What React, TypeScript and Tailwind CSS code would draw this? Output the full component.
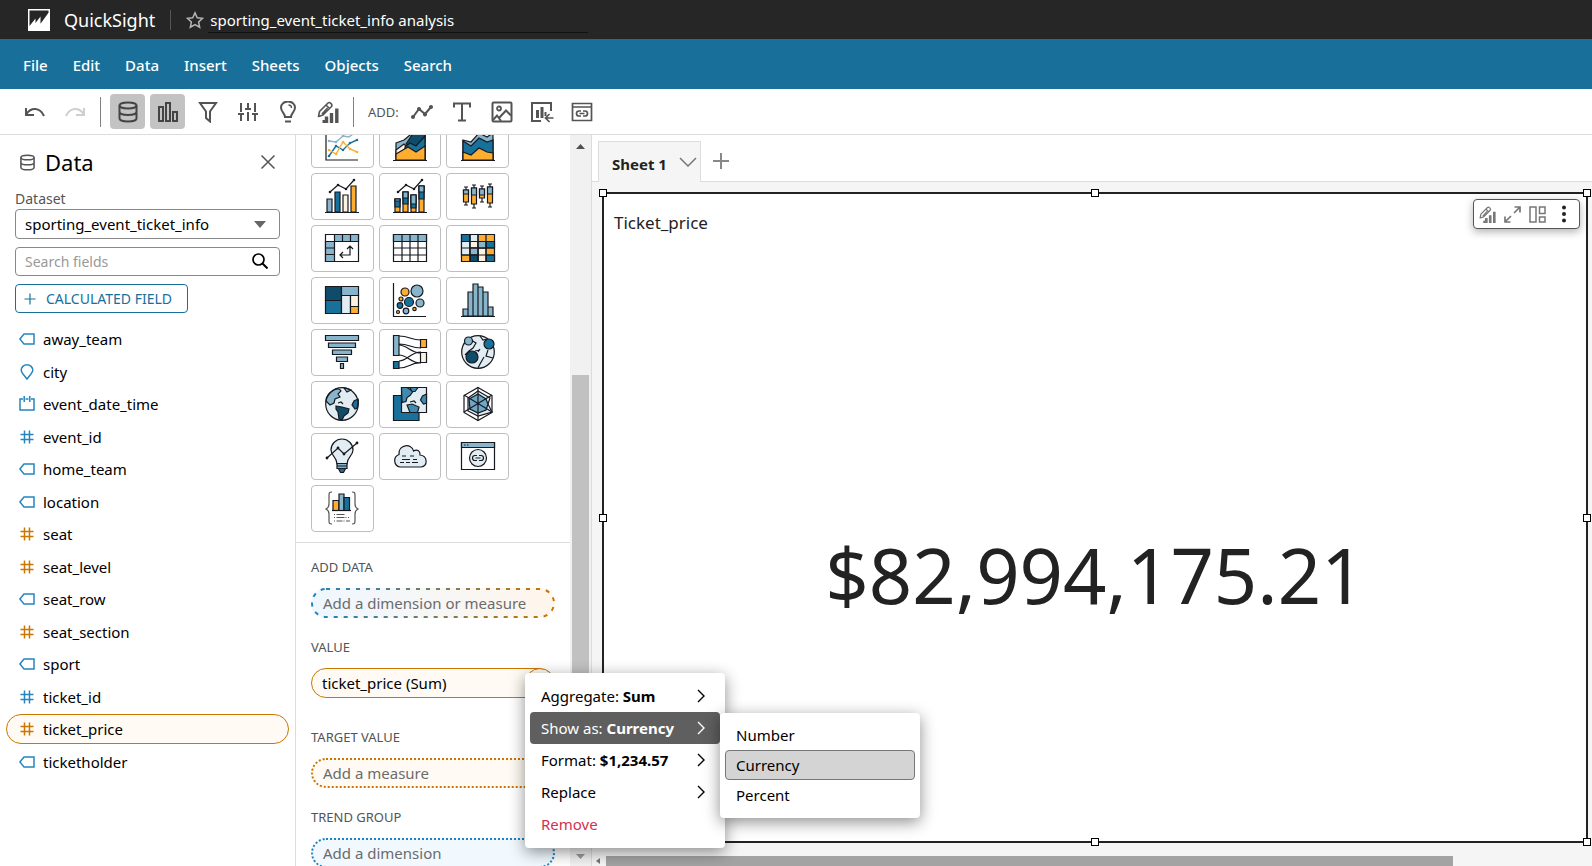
import React from 'react';

type P = { className?: string; children: React.ReactNode; vb?: string; w?: number; h?: number };
const Svg = ({ className, children, vb = '0 0 24 24', w = 24, h = 24 }: P) => (
  <svg className={className} viewBox={vb} width={w} height={h} fill="none" stroke="currentColor" strokeWidth="2" aria-hidden="true">
    {children}
  </svg>
);

const K = '#16191f';
const LB = '#88b5cb';
const MB = '#17719b';
const DB = '#0f4c6a';
const OR = '#fdad32';
const CR = '#fdf1e2';
const PB = '#e1edf2';

const Database = ({ className, w = 22 }: { className?: string; w?: number }) => (
  <Svg className={className} w={w} h={w} vb="0 0 22 22">
    <ellipse cx="11" cy="4.500" rx="8.500" ry="3" />
    <path d="M2.500 4.500v13c0 1.700 3.800 3 8.500 3s8.500-1.300 8.500-3v-13M2.500 11c0 1.700 3.800 3 8.500 3s8.500-1.300 8.500-3" />
  </Svg>
);

const EditChart = ({ w }: { w: number }) => (
  <Svg w={w} h={w} vb="0 0 22 22">
    <path strokeWidth="1.600" strokeLinejoin="round" d="M1.500 15.500l1-5L11 2c1.500-1.500 5 1.500 3.500 3.500L6 14zM9 4l3.500 3.500M5 13l5.500-6" />
    <path strokeWidth="3.400" d="M9.500 15.500V22M14.500 12v10M19.800 7.500V22" />
    <path strokeWidth="3" d="M5.500 20.500h2.500" />
  </Svg>
);

const tools: { name: string; icon: React.ReactNode; active?: boolean }[] = [
  { name: 'Data', active: true, icon: <Database /> },
  {
    name: 'Visuals', active: true,
    icon: <Svg w={22} h={22} vb="0 0 22 22"><path d="M2 6h4v14H2zM9 2h4v18H9zM16 11h4v9h-4z" /></Svg>,
  },
  { name: 'Filter', icon: <Svg w={20} h={22} vb="0 0 20 22"><path d="M2 2h16l-6 8.500v10L8 17v-6.500z" /></Svg> },
  {
    name: 'Parameters',
    icon: <Svg w={22} h={22} vb="0 0 22 22"><path d="M4 2v9M1 13h6M4 13v7M11 2v5M8 8h6M11 11v9M18 2v9M15 13h6M18 13v7" /></Svg>,
  },
  {
    name: 'Insights',
    icon: <Svg w={20} h={22} vb="0 0 20 22"><path d="M7 16c0-4-4-5-4-9.500a7 6 0 0 1 14 0c0 4.500-4 5.500-4 9.500zM7 20.500h6" /><path strokeWidth="1.400" d="M10.500 4c2 0 3 1.200 3 3" /></Svg>,
  },
  { name: 'Edit visual', icon: <EditChart w={22} /> },
];

const addTools: { name: string; icon: React.ReactNode }[] = [
  {
    name: 'Visual',
    icon: <Svg w={22} h={22} vb="0 0 22 22"><path d="M2 16L8 8l6 5 6-7" /><path fill="currentColor" stroke="none" d="M2 14a2 2 0 1 0 .01 0zM8 6a2 2 0 1 0 .01 0zM14 11.500a2 2 0 1 0 .01 0zM20 4a2 2 0 1 0 .01 0z" /></Svg>,
  },
  { name: 'Text', icon: <Svg w={20} h={20} vb="0 0 20 20"><path d="M2 5.500V1.500h16v4M10 1.500v17M6 18.500h8" /></Svg> },
  {
    name: 'Image',
    icon: <Svg w={22} h={22} vb="0 0 22 22"><rect x="1.500" y="1.500" width="19" height="19" rx="1" /><circle cx="8" cy="7.500" r="2" strokeWidth="1.800" /><path d="M2 19l4-4.500 4 5.500M8 17l7-7.500 5 5" /></Svg>,
  },
  {
    name: 'Import visual',
    icon: <Svg w={24} h={22} vb="0 0 24 22"><path d="M11 20H2V2h19v8" /><path strokeWidth="3" d="M7.500 9v8M12 6v11" /><path d="M15.500 11v4" /><path strokeWidth="1.700" d="M23.500 17h-7M19.500 13l-4 4 4 4" /></Svg>,
  },
  {
    name: 'Custom content',
    icon: <Svg w={22} h={20} vb="0 0 22 20"><path strokeWidth="1.700" d="M1.500 1.500h19v17h-19zM1.500 5h19" /><path strokeWidth="1.700" d="M10 9H8a2.500 2.500 0 0 0 0 5h2M12 9h2a2.500 2.500 0 0 1 0 5h-2M8.500 11.500h5" /></Svg>,
  },
];

const FieldIcon = ({ kind }: { kind: string }) => {
  if (kind === 'tag')
    return <Svg w={16} h={12} vb="0 0 16 12" className="text-[#2585bf]"><path strokeWidth="1.500" d="M.9 6L5 1h10v10H5z" /></Svg>;
  if (kind === 'pin')
    return <Svg w={14} h={16} vb="0 0 14 16" className="text-[#2585bf]"><path strokeWidth="1.500" d="M7 15C4.500 11.500 1.200 9 1.200 6a5.800 5.200 0 0 1 11.600 0c0 3-3.300 5.500-5.800 9z" /></Svg>;
  if (kind === 'date')
    return <Svg w={16} h={16} vb="0 0 16 16" className="text-[#2585bf]"><path strokeWidth="1.500" d="M4 3H1v11h14V3h-3M6.500 3h3M5.200 0v6M10.800 0v6" /></Svg>;
  return (
    <Svg w={14} h={14} vb="0 0 14 14" className={kind === 'measure' ? 'text-[#cb7600]' : 'text-[#2585bf]'}>
      <path strokeWidth="1.500" d="M.5 4.500h13M.5 9.500h13M4.500.5v13M9.500.5v13" />
    </Svg>
  );
};

const fields: [string, string][] = [
  ['away_team', 'tag'], ['city', 'pin'], ['event_date_time', 'date'], ['event_id', 'id'], ['home_team', 'tag'],
  ['location', 'tag'], ['seat', 'measure'], ['seat_level', 'measure'], ['seat_row', 'tag'], ['seat_section', 'measure'],
  ['sport', 'tag'], ['ticket_id', 'id'], ['ticket_price', 'measure'], ['ticketholder', 'tag'],
];

const axis = <path d="M1 1v32h32" />;
const base = <path d="M0 33.500h34" />;
const trend = <><path d="M5 13l8-7 8 4 8-9" /><path strokeWidth="2.600" strokeLinecap="round" d="M5 13h.01M13 6h.01M21 10h.01M29 1h.01" /></>;
const continents = (
  <>
    <path fill={LB} d="M9 3c3-2 6-1 7 1l-3 3 2 3-5 2-1 4-4 2-4-4c0-5 4-9 8-11z" />
    <path fill={LB} d="M19 1l3 4 4-2c-2-1-5-2-7-2z" />
    <path fill={MB} d="M33 12l-4 2-2 4 3 4 2-1c1-3 2-6 1-9z" />
    <path fill={DB} d="M11 19l6 1 7 2-1 4-4 3-2 4-3-1-1-7-2-3z" />
    <path d="M13 16l3-1 2 2" />
  </>
);

const visuals: { name: string; art: React.ReactNode }[] = [
  {
    name: 'Line chart',
    art: <>{axis}<g strokeWidth="1.400"><path stroke={LB} d="M4 14l7 1 7-6 6 1 8-6" /><path stroke={MB} d="M4 29l7-10 7 4 7-7 7-3" /><path stroke={OR} d="M4 23l7 4 7-12 7 7 7 3" /></g><path stroke={OR} strokeWidth="2.600" strokeLinecap="round" d="M4 23h.01M11 27h.01M18 15h.01M25 22h.01M32 25h.01" /><path stroke={MB} strokeWidth="2.600" strokeLinecap="round" d="M4 29h.01M11 19h.01M18 23h.01M25 16h.01M32 13h.01" /><path stroke={LB} strokeWidth="2.600" strokeLinecap="round" d="M4 14h.01M11 15h.01M18 9h.01" /></>,
  },
  {
    name: 'Area line chart',
    art: <><path fill={LB} d="M3 16l8-3 6-5 7-5 8-3v33H3z" /><path fill={DB} d="M13 17l6-9 13-8v15l-8 5z" /><path fill={CR} d="M3 23l8-6 4 4-7 5-5 3z" /><path fill={MB} d="M12 20l5-4 6 3 9-10v24H12z" /><path fill={OR} d="M3 27l12-7 8 5 9-6v14H3z" />{base}</>,
  },
  {
    name: 'Stacked area line chart',
    art: <><path fill={LB} d="M2 13l8 2 8-9 8 4 6-4v27H2z" /><path fill={MB} d="M2 14l8 5 8-8 8 4 6-2v20H2z" /><path fill={OR} d="M2 25l8 3 8-7 8 4 6 1v7H2z" />{base}</>,
  },
  {
    name: 'Clustered bar combo chart',
    art: <><path fill={LB} d="M2 20h5v13H2z" /><path fill={MB} d="M10 13h5v20h-5z" /><path fill={CR} d="M18 16h5v17h-5z" /><path fill={OR} d="M26 7h5v26h-5z" />{trend}{base}</>,
  },
  {
    name: 'Stacked bar combo chart',
    art: <><path fill={OR} d="M2 20h5v13H2zM10 13h5v20h-5zM18 16h5v17h-5zM26 7h5v26h-5z" /><path fill={MB} d="M2 20h5v8H2zM10 13h5v12h-5zM18 16h5v13h-5zM26 7h5v13h-5z" /><path fill={LB} d="M2 20h5v2H2zM10 13h5v6h-5zM18 16h5v9h-5zM26 7h5v6h-5z" />{trend}{base}</>,
  },
  {
    name: 'Box plot',
    art: <><path d="M5 8v18M3 8h4M3 26h4M13 6v23M11 6h4M11 29h4M21 7v16M19 7h4M19 23h4M29 5v23M27 5h4M27 28h4" /><path fill={OR} d="M2.500 11h5v12h-5zM10.500 9h5v16h-5zM18.500 10h5v9h-5zM26.500 8h5v16h-5z" /><path fill={LB} d="M2.500 11h5v4h-5zM10.500 9h5v7h-5zM18.500 10h5v6h-5zM26.500 8h5v7h-5z" /></>,
  },
  {
    name: 'Pivot table',
    art: <><path fill="#fff" d="M.5 3.500h33v27H.5z" /><path fill={LB} d="M9.500 3.500h24v7h-24zM.5 10.500h9v20h-9z" /><path d="M17.500 3.500v7M25.500 3.500v7M.5 17h9M.5 23.500h9M15 24h10v-8M18 21l-3 3 3 3M22 18l3-3 3 3" /></>,
  },
  {
    name: 'Table',
    art: <><path fill="#fff" d="M.5 3.500h33v27H.5z" /><path fill={LB} d="M.5 3.500h33v7H.5z" /><path d="M9 3.500v27M17 3.500v27M25 3.500v27M.5 17h33M.5 24h33" /></>,
  },
  {
    name: 'Heat map',
    art: <><path fill={OR} d="M.5 3.500h33v27H.5z" /><path fill={MB} d="M.5 3.500H9v7H.5zM25 10.500h8.500V17H25zM25 24h8.500v6.500H25z" /><path fill={PB} d="M9 3.500h8v7H9zM.5 10.500H9V24H.5z" /><path fill={CR} d="M9 10.500h8V17H9zM17 17h8v13.500h-8z" /><path fill={LB} d="M17 10.500h8V17h-8zM9 17h8v7H9z" /><path fill={DB} d="M9 24h8v6.500H9z" /><path d="M9 3.500v27M17 3.500v27M25 3.500v27M.5 10.500h33M.5 17h33M.5 24h33" /></>,
  },
  {
    name: 'Tree map',
    art: <><path fill={DB} d="M.5 3.500h16v14H.5z" /><path fill={MB} d="M.5 17.500h16v13H.5z" /><path fill={LB} d="M16.500 3.500h17v9h-17z" /><path fill={PB} d="M16.500 12.500h9v18h-9z" /><path fill={CR} d="M25.500 12.500h8v11h-8z" /><path fill={OR} d="M25.500 23.500h8v7h-8z" /></>,
  },
  {
    name: 'Scatter plot',
    art: <><path d="M.5 0v33.500H33" /><circle cx="12" cy="9" r="4" fill={OR} /><circle cx="24" cy="8" r="6" fill={LB} /><circle cx="16" cy="19" r="4.500" fill={MB} /><circle cx="27" cy="20" r="4" fill={LB} /><circle cx="7" cy="22.500" r="2.800" fill={MB} /><circle cx="13" cy="28" r="2.800" fill={LB} /><circle cx="8" cy="16" r="2" fill={OR} /><circle cx="5" cy="29" r="1.500" fill={OR} /><circle cx="21.500" cy="26" r="1.700" fill={OR} /></>,
  },
  {
    name: 'Histogram',
    art: <><path fill={LB} d="M2 26h5v7H2zM7 9h5v24H7zM12 1h5v32h-5zM17 4h5v29h-5zM22 9h5v24h-5zM27 24h5v9h-5z" />{base}</>,
  },
  {
    name: 'Funnel chart',
    art: <path fill={LB} d="M.5.5h33v5H.5zM3.500 8h27v4.500h-27zM7.500 15h19v4.500h-19zM11.500 22h11v4.500h-11zM15.500 28.500h3v5h-3z" />,
  },
  {
    name: 'Sankey diagram',
    art: <><path d="M6 1c11 0 11 4 22 4M6 9c11 0 11 4 22 4M6 10c8 0 12 8 22 8M6 20c9 0 11 8 22 8M6 26c9 0 11-9 22-9M6 33c11 0 12-6 22-5" /><path fill={LB} d="M.5.5h5.500v20H.5z" /><path fill={MB} d="M.5 26.500h5.500v7H.5z" /><path fill={OR} d="M27.500 4.500h6v8h-6z" /><path fill={CR} d="M27.500 17.500h6v10h-6z" /></>,
  },
  {
    name: 'Points on map',
    art: <><circle cx="17" cy="17" r="16.300" fill={PB} /><path d="M10 5l5 3-3 5-4 3-4 4M19 1l3 4 4-1M19 14l-2 3M27 15l-2 6 7 2M23 22l-4 7-2 4M14 16l5-1" /><circle cx="7.500" cy="6" r="4" fill={LB} /><circle cx="28" cy="9" r="5" fill={MB} /><circle cx="11" cy="22" r="6" fill={DB} /></>,
  },
  {
    name: 'Filled map',
    art: <><circle cx="17" cy="17" r="16.300" fill={PB} stroke="none" />{continents}<circle cx="17" cy="17" r="16.300" /></>,
  },
  {
    name: 'Layer map',
    art: <><path fill={MB} d="M.5 8.500H26v25H.5z" /><path fill={PB} d="M8.500.5h25v25h-25z" /><path fill="#3f8cb0" d="M8.500.5H14l6 4-3 4-3 2-1 4-4 1zM17 .5l2 4h3l3-4zM33.500 7l-4 2-2 4 3 4 3-1zM14 18l5-1 7 3-1 4-1 1.500h-7z" /><path d="M17 15l4-1 2 2" /></>,
  },
  {
    name: 'Radar chart',
    art: <><path d="M17 .5l14 8v17l-14 8-14-8v-17z" /><path fill={PB} d="M17 4l12 7-2 6 4 8-14 4-10-5V11z" /><path fill="#6fa8c6" d="M17 7l8 5 2 5-2 6-8 3-8-4-1-10z" /><path d="M17 0v34M3 8l28 17M31 8L3 25" /></>,
  },
  {
    name: 'Insight',
    art: <><path fill={PB} d="M12 25c0-7-6-8-6-14a11 11 0 0 1 22 0c0 6-6 7-6 14z" /><path fill={LB} d="M12 24.500h10v5H12z" /><path fill={MB} d="M13.500 29.500h7l-2 4h-3zM12 27h10" /><path d="M2 19l11-10 6 6L32 4" /><path strokeWidth="2.800" strokeLinecap="round" d="M2 19h.01M13 9h.01M19 15h.01M32 4h.01" /></>,
  },
  {
    name: 'Word cloud',
    art: <><path fill={PB} d="M7 28a6.500 6.500 0 0 1-1-12.500C5 5 19 4 20.500 12c4-2 7 0 6.500 4 8 1 8 11 1 12z" /><path d="M9 17h4M17 17h4M9 20.500h8M20 20.500h4M7 23.500h4M13 23.500h4M19 23.500h6" /></>,
  },
  {
    name: 'Custom visual content',
    art: <><path fill="#fff" d="M.5 3.500h33v27H.5z" /><path fill={LB} d="M.5 3.500h33v5H.5z" /><path strokeDasharray="1.500 1.500" d="M3 6h6" /><circle cx="17" cy="19" r="8.500" fill={PB} /><path d="M16 16.500h-2a2.500 2.500 0 0 0 0 5h2M18 16.500h2a2.500 2.500 0 0 1 0 5h-2M14.500 19h5" /></>,
  },
  {
    name: 'Highcharts visual',
    art: <><path fill={OR} d="M8 9.500h6v10H8z" /><path fill={LB} d="M14 3h5v16.500h-5z" /><path fill={MB} d="M19 6.500h5.500v13H19z" /><path d="M7 19.500h19" /><g stroke="#555"><path d="M7 1C4 1 4 2 4 5v8c0 3-1 4-3 5 2 1 3 2 3 5v6c0 3 0 4 3 4M27 1c3 0 3 1 3 4v8c0 3 1 4 3 5-2 1-3 2-3 5v6c0 3 0 4-3 4" /><path strokeDasharray="1 1.500 8 1" d="M9 23.500h11M9 26.500h15" /><path strokeDasharray="1 1.500 6 1" d="M9 30h16" /></g></>,
  },
];

const menu: [string, string][] = [['Aggregate:', 'Sum'], ['Show as:', 'Currency'], ['Format:', '$1,234.57'], ['Replace', '']];

const handles = [
  'left-0 top-0', 'left-1/2 top-0', 'left-full top-0', 'left-0 top-1/2', 'left-full top-1/2', 'left-0 top-full', 'left-1/2 top-full', 'left-full top-full',
];

const Label = ({ children }: { children: string }) => <h3 className="text-[13px] leading-5 text-[#545454]">{children}</h3>;

export default function App() {
  return (
    <div className="flex h-screen flex-col overflow-hidden bg-white font-['Noto_Sans','Open_Sans',sans-serif] text-[15px] leading-5 text-black">
      <header className="flex h-[39px] shrink-0 items-center bg-[#262626] pl-7 text-white">
        <svg width="22" height="22" viewBox="0 0 22 22" aria-hidden="true">
          <path fill="#fff" d="M0 0h22v22H0z" />
          <path fill="#262626" d="M1.500 1.500h19v2.200l-8 11V7.500l-5 6.500V9.500l-6 7.500z" />
        </svg>
        <span className="ml-[14px] pt-px text-[18px] leading-6">QuickSight</span>
        <span className="mx-[15px] h-5 w-px bg-[#555]" />
        <button aria-label="Favorite" className="text-[#b5b5b5]">
          <Svg w={18} h={18}><path d="M12 2.500l3 6.500 7 .8-5.200 4.800 1.400 7L12 18.100l-6.200 3.500 1.400-7L2 9.800 9 9z" /></Svg>
        </button>
        <h1 className="ml-1 w-[380px] border-b border-[#111] pt-px pl-[2px] leading-6">sporting_event_ticket_info analysis</h1>
      </header>

      <nav className="flex h-[50px] shrink-0 items-center gap-[25px] bg-[#18709a] pt-px pl-[23px] font-medium text-white">
        {['File', 'Edit', 'Data', 'Insert', 'Sheets', 'Objects', 'Search'].map((m) => <button key={m}>{m}</button>)}
      </nav>

      <div className="flex h-[46px] shrink-0 items-center border-b border-[#dcdcdc] pl-5 text-[#545454]">
        <button aria-label="Undo" className="flex w-10 pl-1"><Svg w={22} h={16} vb="0 0 22 16"><path d="M2 4v7h8M2.500 10C7 3 16 3 20 12" /></Svg></button>
        <button aria-label="Redo" className="flex w-10 pl-1 text-[#cfcfcf]"><Svg w={22} h={16} vb="0 0 22 16"><path d="M20 4v7h-8M19.500 10C15 3 6 3 2 12" /></Svg></button>
        <span className="mr-[9px] h-[30px] w-px bg-[#808080]" />
        <div className="flex gap-[5px]">
          {tools.map((t) => (
            <button key={t.name} aria-label={t.name} className={`flex h-[35px] w-[35px] items-center justify-center rounded ${t.active ? 'bg-[#c3c3c3] text-[#444]' : ''}`}>{t.icon}</button>
          ))}
        </div>
        <span className="ml-2 h-[30px] w-px bg-[#808080]" />
        <span className="ml-[14px] w-[34px] text-[13px]">ADD:</span>
        <div className="flex">
          {addTools.map((t) => <button key={t.name} aria-label={t.name} className="flex h-9 w-10 items-center justify-center">{t.icon}</button>)}
        </div>
      </div>

      <div className="flex min-h-0 flex-1">
        <aside className="w-[296px] shrink-0 border-r border-[#dcdcdc] pr-[15px] pl-[15px]">
          <div className="mt-[11px] flex h-8 items-center">
            <Database w={17} className="ml-1 text-[#545454]" />
            <h2 className="ml-[9px] text-[22px] leading-8">Data</h2>
            <button aria-label="Close" className="mr-[4px] ml-auto text-[#545454]"><Svg w={16} h={16} vb="0 0 16 16"><path strokeWidth="1.500" d="M1.500 1.500l13 13M14.500 1.500l-13 13" /></Svg></button>
          </div>
          <label htmlFor="dataset" className="mt-[11px] block text-sm leading-5 text-[#545454]">Dataset</label>
          <div className="relative">
            <select id="dataset" className="h-[30px] w-full appearance-none rounded border border-[#888] bg-white pl-[9px]"><option>sporting_event_ticket_info</option></select>
            <svg className="pointer-events-none absolute top-3 right-[14px]" width="12" height="7" aria-hidden="true"><path fill="#666" d="M0 0h12L6 7z" /></svg>
          </div>
          <div className="relative mt-2">
            <input aria-label="Search fields" placeholder="Search fields" className="block h-[29px] w-full rounded border border-[#888] pl-[9px] text-sm placeholder:text-[#999]" />
            <Svg w={16} h={16} vb="0 0 16 16" className="absolute top-[6px] right-3"><circle cx="6.500" cy="6.500" r="5.500" strokeWidth="1.700" /><path d="M10.500 10.500l5 5" /></Svg>
          </div>
          <button className="mt-2 flex h-[29px] w-[173px] items-center rounded border border-[#18709a] pl-[8px] text-sm text-[#18709a]">
            <Svg w={12} h={12} vb="0 0 12 12"><path strokeWidth="1.200" d="M6 .5v11M.5 6h11" /></Svg>
            <span className="ml-[10px]">CALCULATED FIELD</span>
          </button>
          <ul className="mt-[10px] -mr-[9px] -ml-[9px] flex h-[455px] flex-col">
            {fields.map(([name, kind]) => (
              <li key={name} className="flex flex-1 items-center">
                <button className={`flex h-[30px] w-full items-center rounded-full border pl-3 ${name === 'ticket_price' ? 'border-[#cb7600] bg-[#fffbf4]' : 'border-transparent'}`}>
                  <span className="flex w-4 justify-center"><FieldIcon kind={kind} /></span>
                  <span className="ml-2">{name}</span>
                </button>
              </li>
            ))}
          </ul>
        </aside>

        <section className="relative flex w-[296px] shrink-0 border-r border-[#dcdcdc]">
          <div className="min-w-0 flex-1 overflow-hidden">
            <div className="-mt-[14px] border-b border-[#dcdcdc] pb-[10px] pl-[15px]">
              <div className="grid w-[198px] grid-cols-3 gap-[5px]">
                {visuals.map((v) => (
                  <button key={v.name} aria-label={v.name} className="flex h-[47px] items-center justify-center rounded border border-[#bfbfbf] bg-white pb-px">
                    <svg width="34" height="34" viewBox="0 0 34 34" className="overflow-visible" fill="none" stroke={K} strokeWidth="1.200" aria-hidden="true">{v.art}</svg>
                  </button>
                ))}
              </div>
            </div>
            <div className="pr-[15px] pl-[15px]">
              <div className="mt-[14px]"><Label>ADD DATA</Label></div>
              <button className="relative mt-[11px] flex h-[30px] w-full items-center rounded-full bg-linear-to-r from-[#eef7ff] to-[#fff6ec] pl-3 text-[#6b6b6b]">
                <svg className="absolute inset-0 h-full w-full" aria-hidden="true">
                  <defs><linearGradient id="mix"><stop offset="0" stopColor="#1f83c0" /><stop offset="1" stopColor="#cb7600" /></linearGradient></defs>
                  <rect x="1" y="1" width="242" height="28" rx="14" fill="none" stroke="url(#mix)" strokeWidth="2" strokeDasharray="4 6" />
                </svg>
                Add a dimension or measure
              </button>
              <div className="mt-[19px]"><Label>VALUE</Label></div>
              <button className="mt-[11px] flex h-[30px] w-full items-center overflow-hidden rounded-full border border-[#cb7600] bg-[#fffbf4] pl-[10px]">
                ticket_price (Sum)
                <span className="-mr-px ml-auto h-[30px] w-[30px] rounded-full border border-[#cb7600]" />
              </button>
              <div className="mt-[29px]"><Label>TARGET VALUE</Label></div>
              <button className="mt-[11px] flex h-[30px] w-full items-center rounded-full border-2 border-dotted border-[#cb7600] bg-[#fffbf4] pl-[10px] text-[#6b6b6b]">Add a measure</button>
              <div className="mt-[19px]"><Label>TREND GROUP</Label></div>
              <button className="mt-[11px] flex h-[30px] w-full items-center rounded-full border-2 border-dotted border-[#1f83c0] bg-[#f1f9ff] pl-[10px] text-[#6b6b6b]">Add a dimension</button>
            </div>
          </div>
          <div className="flex w-[21px] flex-col items-center bg-[#f1f1f1] pt-[9px] pb-[7px]">
            <svg width="9" height="5" aria-hidden="true"><path fill="#505050" d="M0 5h9L4.500 0z" /></svg>
            <div className="mt-[226px] w-[17px] flex-1 bg-[#c1c1c1]" />
            <svg className="mt-[22px]" width="9" height="5" aria-hidden="true"><path fill="#999" d="M0 0h9L4.500 5z" /></svg>
          </div>

          <div role="menu" className="absolute top-[538px] left-[229px] z-20 flex h-[175px] w-[200px] flex-col rounded bg-white p-[5px] pt-[7px] shadow-[0_4px_16px_rgba(0,0,0,0.45)]">
            {menu.map(([a, b]) => (
              <button key={a} role="menuitem" className={`flex h-8 shrink-0 items-center rounded px-[11px] text-left ${b === 'Currency' ? 'bg-[#5f5f5f] text-white' : ''}`}>
                <span>{a} <b className="font-bold">{b}</b></span>
                <Svg w={8} h={14} vb="0 0 8 14" className="mr-1 ml-auto"><path strokeWidth="1.400" d="M1 1l6 6-6 6" /></Svg>
              </button>
            ))}
            <button role="menuitem" className="flex h-8 items-center px-[11px] text-[#d13250]">Remove</button>
          </div>
          <div role="menu" className="absolute top-[578px] left-[424px] z-30 flex w-[200px] flex-col rounded bg-white px-[5px] pt-[7px] pb-2 shadow-[0_4px_16px_rgba(0,0,0,0.45)]">
            {['Number', 'Currency', 'Percent'].map((n) => (
              <button key={n} role="menuitem" className={`flex h-[30px] items-center rounded border px-[10px] ${n === 'Currency' ? 'border-[#777] bg-[#d4d4d4]' : 'border-transparent'}`}>{n}</button>
            ))}
          </div>
        </section>

        <main className="flex min-w-0 flex-1 flex-col bg-[#f5f5f5]">
          <div className="flex h-[47px] shrink-0 items-end border-b border-[#dcdcdc] bg-white pl-[6px]">
            <button className="-mb-px flex h-[41px] w-[103px] items-center border border-b-0 border-[#dcdcdc] bg-[#f5f5f5] pt-[3px] pl-[13px] font-bold text-[#222]">
              Sheet 1
              <Svg w={18} h={10} vb="0 0 18 10" className="mr-[3px] mb-1 ml-auto text-[#777]"><path strokeWidth="1.500" d="M1 1l8 8 8-8" /></Svg>
            </button>
            <button aria-label="Add sheet" className="mb-3 ml-3 text-[#888]"><Svg w={16} h={16} vb="0 0 16 16"><path d="M8 0v16M0 8h16" /></Svg></button>
          </div>
          <div className="relative mt-[10px] mr-1 ml-[10px] flex min-h-0 flex-1 flex-col border-2 border-[#222] bg-white">
            <div className="pointer-events-none absolute -inset-px z-10">
              {handles.map((h) => <span key={h} className={`absolute h-2 w-2 -translate-x-1/2 -translate-y-1/2 border border-black bg-white ${h}`} />)}
            </div>
            <div className="flex items-start justify-between pt-[5px] pr-[6px] pl-[10px]">
              <h2 className="mt-3 text-[17px] leading-6 text-[#222]">Ticket_price</h2>
              <div className="flex h-[30px] w-[107px] items-center rounded border border-[#555] bg-white pl-[5px] text-[#777] shadow-[0_3px_8px_rgba(0,0,0,0.3)]">
                <button aria-label="Edit visual"><EditChart w={17} /></button>
                <button aria-label="Maximize" className="ml-2"><Svg w={17} h={17} vb="0 0 17 17"><path strokeWidth="1.700" d="M10 7l6-6M10.500 1H16v5.500M7 10l-6 6M1 10.500V16h5.500" /></Svg></button>
                <button aria-label="Layout" className="ml-2"><Svg w={17} h={17} vb="0 0 17 17"><path strokeWidth="1.500" d="M1 1h6v15H1zM10.500 1H16v6.500h-5.500zM10.500 11H16v5h-5.500z" /></Svg></button>
                <button aria-label="More options" className="ml-4 text-[#222]"><svg width="4" height="18" fill="currentColor" aria-hidden="true"><circle cx="2" cy="2.500" r="2" /><circle cx="2" cy="9" r="2" /><circle cx="2" cy="15.500" r="2" /></svg></button>
              </div>
            </div>
            <div className="flex flex-1 items-center justify-center pt-[74px] text-[76px] leading-none text-[#222]">$82,994,175.21</div>
          </div>
          <div className="mt-[13px] flex h-[10px] shrink-0 items-center pl-1">
            <svg width="4" height="6" aria-hidden="true"><path fill="#777" d="M4 0v6L0 3z" /></svg>
            <div className="ml-[6px] h-full w-[85%] bg-[#a3a3a3]" />
          </div>
        </main>
      </div>
    </div>
  );
}
